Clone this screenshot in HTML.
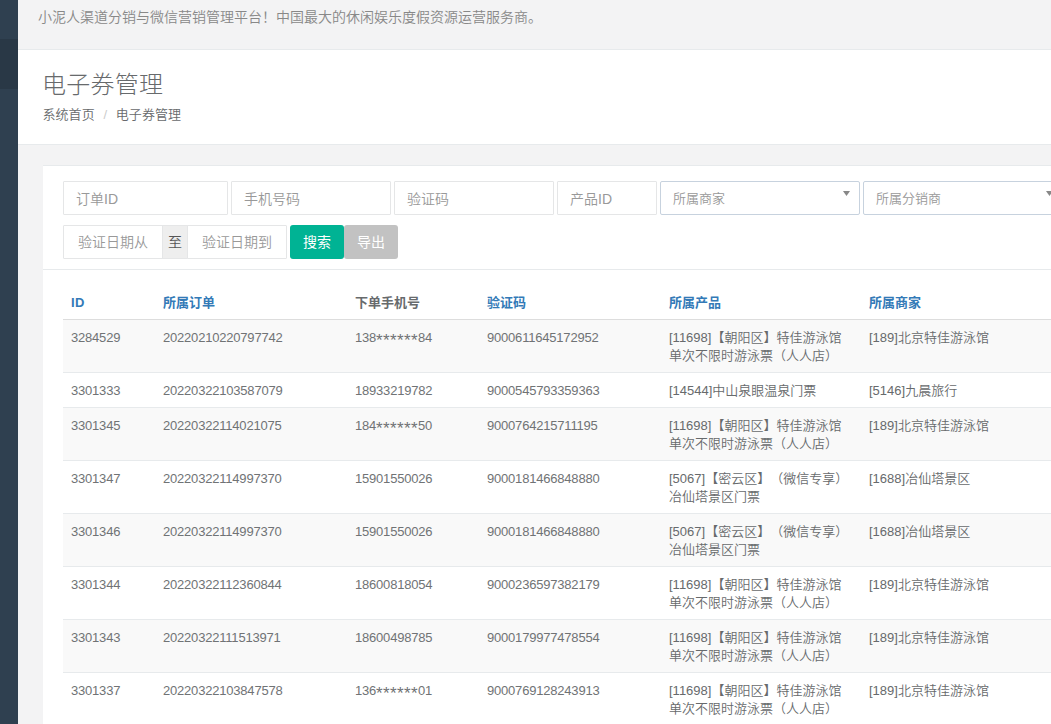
<!DOCTYPE html>
<html lang="zh-CN">
<head>
<meta charset="utf-8">
<title>电子券管理</title>
<style>
*{box-sizing:border-box;margin:0;padding:0}
html,body{width:1051px;height:724px;overflow:hidden}
body{text-spacing-trim:space-all;background:#f3f3f4;font-family:"Liberation Sans","Noto Sans CJK SC",sans-serif;font-size:13px;font-weight:350;color:#676a6c;position:relative}
#side{position:absolute;left:0;top:0;width:18px;height:724px;background:#2f4050}
#side .act{position:absolute;left:0;top:39px;width:18px;height:50px;background:#293846}
#top{position:absolute;left:18px;top:0;width:1033px;height:50px;background:#f3f3f4;border-bottom:1px solid #e7eaec}
#top .msg{position:absolute;left:20px;top:7px;font-size:14px;line-height:20px;color:#888;white-space:nowrap}
#head{position:absolute;left:18px;top:50px;width:1033px;height:95px;background:#fff;border-bottom:1px solid #e7eaec}
#head h2{position:absolute;left:24px;letter-spacing:0.25px;top:18.5px;font-size:24px;font-weight:300;line-height:32px;color:#676a6c;white-space:nowrap}
#head .bc{position:absolute;left:24.4px;letter-spacing:0.1px;top:56px;font-size:13px;line-height:18px;color:#676a6c;white-space:nowrap}
#head .bc .sep{color:#ccc;padding:0 8.6px}
#panel{position:absolute;left:43px;top:165px;width:1020px;height:600px;background:#fff;border-top:1px solid #e7eaec}
#filter{position:absolute;left:0;top:0;width:1020px;height:104px;border-bottom:1px solid #e7eaec}
.inp{position:absolute;height:34px;border:1px solid #e5e6e7;background:#fff;border-radius:1px;font-size:14px;line-height:32px;color:#999;padding-left:12px;white-space:nowrap;overflow:hidden}
.r1{line-height:34px}
.r2{line-height:33px}
.sel{border-color:#c7d2de;border-radius:2px;font-size:13px;color:#999;line-height:34px}
.sel svg{position:absolute;right:9px;top:9px;width:7px;height:5px;display:block}
.addon{position:absolute;height:34px;background:#eee;border:1px solid #e5e6e7;font-size:14px;line-height:32px;text-align:center;color:#555}
.btn{font-weight:400;position:absolute;height:34px;border-radius:3px;font-size:14px;line-height:34px;text-align:center;color:#fff;white-space:nowrap}
table{position:absolute;left:20px;top:119px;border-collapse:collapse;table-layout:fixed;width:1100px}
th,td{padding:9px 8px 7px;line-height:18px;text-align:left;vertical-align:top;font-size:13px;font-weight:350;border-top:1px solid #e7eaec;white-space:nowrap}
th{font-weight:bold;border-top:none;border-bottom:1px solid #ddd;color:#676a6c}
th.l{color:#337ab7}
tr.o td{background:#f9f9f9}
td:nth-child(-n+4){letter-spacing:-0.2px;color:#707375}
.a{font-size:17px;line-height:0;vertical-align:-3.8px;letter-spacing:0.35px}
th.id{letter-spacing:0.5px}
</style>
</head>
<body>
<div id="side"><div class="act"></div></div>
<div id="top"><div class="msg">小泥人渠道分销与微信营销管理平台！中国最大的休闲娱乐度假资源运营服务商。</div></div>
<div id="head">
  <h2>电子券管理</h2>
  <div class="bc">系统首页<span class="sep">/</span>电子券管理</div>
</div>
<div id="panel">
  <div id="filter">
    <div class="inp r1" style="left:20px;top:15px;width:165px">订单ID</div>
    <div class="inp r1" style="left:188px;top:15px;width:160px">手机号码</div>
    <div class="inp r1" style="left:351px;top:15px;width:160px">验证码</div>
    <div class="inp r1" style="left:514px;top:15px;width:100px">产品ID</div>
    <div class="inp sel" style="left:617px;top:15px;width:200px">所属商家<svg viewBox="0 0 7 5"><polygon points="0,0 7,0 3.5,5" fill="#888"/></svg></div>
    <div class="inp sel" style="left:820px;top:15px;width:200px">所属分销商<svg viewBox="0 0 7 5"><polygon points="0,0 7,0 3.5,5" fill="#888"/></svg></div>
    <div class="inp r2" style="left:20px;top:59px;width:100px;padding-left:14px">验证日期从</div>
    <div class="addon" style="left:119px;top:59px;width:26px">至</div>
    <div class="inp r2" style="left:144px;top:59px;width:100px;padding-left:14px">验证日期到</div>
    <div class="btn" style="left:247px;top:59px;width:54px;background:#00b394">搜索</div>
    <div class="btn" style="left:301px;top:59px;width:54px;background:#c2c2c2">导出</div>
  </div>
  <table>
    <colgroup><col style="width:92px"><col style="width:192px"><col style="width:132px"><col style="width:182px"><col style="width:200px"><col style="width:302px"></colgroup>
    <thead><tr><th class="l id">ID</th><th class="l">所属订单</th><th>下单手机号</th><th class="l">验证码</th><th class="l">所属产品</th><th class="l">所属商家</th></tr></thead>
    <tbody>
    <tr class="o"><td>3284529</td><td>20220210220797742</td><td>138<span class="a">******</span>84</td><td>9000611645172952</td><td>[11698]【朝阳区】特佳游泳馆<br>单次不限时游泳票（人人店）</td><td>[189]北京特佳游泳馆</td></tr>
    <tr><td>3301333</td><td>20220322103587079</td><td>18933219782</td><td>9000545793359363</td><td>[14544]中山泉眼温泉门票</td><td>[5146]九晨旅行</td></tr>
    <tr class="o"><td>3301345</td><td>20220322114021075</td><td>184<span class="a">******</span>50</td><td>9000764215711195</td><td>[11698]【朝阳区】特佳游泳馆<br>单次不限时游泳票（人人店）</td><td>[189]北京特佳游泳馆</td></tr>
    <tr><td>3301347</td><td>20220322114997370</td><td>15901550026</td><td>9000181466848880</td><td>[5067]【密云区】（微信专享）<br>冶仙塔景区门票</td><td>[1688]冶仙塔景区</td></tr>
    <tr class="o"><td>3301346</td><td>20220322114997370</td><td>15901550026</td><td>9000181466848880</td><td>[5067]【密云区】（微信专享）<br>冶仙塔景区门票</td><td>[1688]冶仙塔景区</td></tr>
    <tr><td>3301344</td><td>20220322112360844</td><td>18600818054</td><td>9000236597382179</td><td>[11698]【朝阳区】特佳游泳馆<br>单次不限时游泳票（人人店）</td><td>[189]北京特佳游泳馆</td></tr>
    <tr class="o"><td>3301343</td><td>20220322111513971</td><td>18600498785</td><td>9000179977478554</td><td>[11698]【朝阳区】特佳游泳馆<br>单次不限时游泳票（人人店）</td><td>[189]北京特佳游泳馆</td></tr>
    <tr><td>3301337</td><td>20220322103847578</td><td>136<span class="a">******</span>01</td><td>9000769128243913</td><td>[11698]【朝阳区】特佳游泳馆<br>单次不限时游泳票（人人店）</td><td>[189]北京特佳游泳馆</td></tr>
    </tbody>
  </table>
</div>
</body>
</html>
